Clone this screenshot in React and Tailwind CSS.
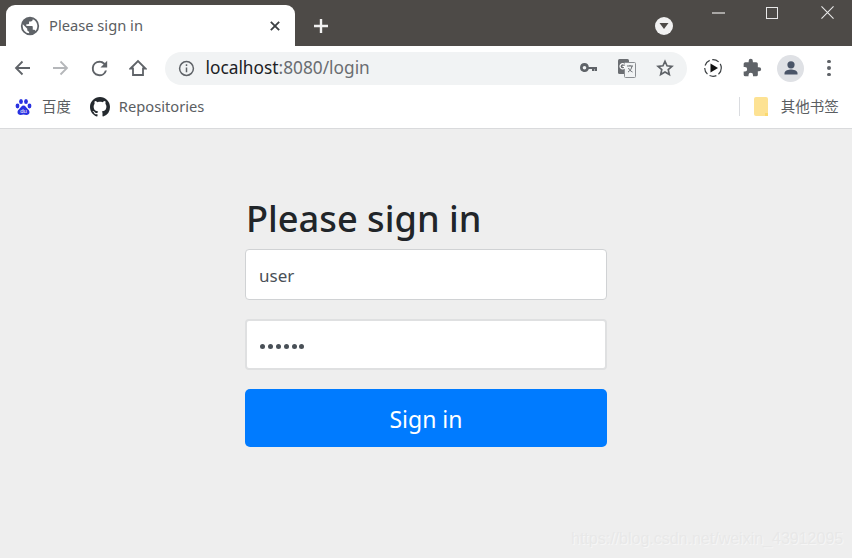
import React from "react";

const sans = { fontFamily: '"Noto Sans", "Noto Sans CJK SC", sans-serif' };

function Tab() {
  return (
    <div className="relative ml-[6px] mt-[5px] flex h-[41px] w-[289px] items-center rounded-t-[9px] bg-white pl-[13px] pr-[15px]">
      <svg width="22" height="22" viewBox="0 0 24 24" fill="#5f6368">
        <path d="M12 2a10 10 0 1 0 0 20 10 10 0 0 0 0-20zM4 12c0-.6.07-1.2.2-1.8L9 15v1c0 1.1.9 2 2 2v2a8 8 0 0 1-7-8zm13.9 5.4c-.26-.8-1-1.4-1.9-1.4h-1v-3c0-.55-.45-1-1-1H8v-2h2c.55 0 1-.45 1-1V7h2c1.1 0 2-.9 2-2v-.4a8 8 0 0 1 2.9 12.8z" />
      </svg>
      <span className="ml-[8px] flex-1 text-[14.700px] leading-none text-[#5b5e62]">Please sign in</span>
      <svg width="10" height="10" viewBox="0 0 12 12" stroke="#3c4043" strokeWidth="2.200" fill="none">
        <path d="M1 1l10 10M11 1L1 11" />
      </svg>
    </div>
  );
}

function TitleBar() {
  return (
    <div className="flex h-[46px] bg-[#4d4a47]">
      <Tab />
      <div className="ml-[17px] mt-[17px] h-[16px]">
        <svg width="18" height="18" viewBox="0 0 18 18" stroke="#f1f1f1" strokeWidth="2.400" fill="none">
          <path d="M9 2v14M2 9h14" />
        </svg>
      </div>
      <div className="ml-[325px] mt-[17px] flex h-[18px] w-[18px] items-center justify-center rounded-full bg-[#f1f1f1]">
        <svg width="10" height="8" viewBox="0 0 10 8" fill="#4d4a47">
          <path d="M0.5 1h9L5 7z" />
        </svg>
      </div>
      <div className="ml-[39px] mt-[12px] h-[2px] w-[13px] bg-[#a9a7a5]" />
      <div className="ml-[41px] mt-[7px] h-[12px] w-[12px] border border-[#e8e8e8]" />
      <svg className="ml-[43px] mt-[6px]" width="13" height="13" viewBox="0 0 14 14" stroke="#e8e8e8" strokeWidth="1.200" fill="none">
        <path d="M0.5 0.5l13 13M13.5 0.5l-13 13" />
      </svg>
    </div>
  );
}

function Toolbar() {
  return (
    <div className="flex h-[44px] items-center bg-white">
      <svg className="ml-[14px]" width="17" height="16" viewBox="0 0 17 16" stroke="#5f6368" strokeWidth="1.800" fill="none">
        <path d="M16 8H2M8.500 1.500L2 8l6.500 6.500" />
      </svg>
      <svg className="ml-[21px]" width="17" height="16" viewBox="0 0 17 16" stroke="#b5b7ba" strokeWidth="1.800" fill="none">
        <path d="M1 8h14M8.500 1.500L15 8l-6.500 6.500" />
      </svg>
      <svg className="ml-[19px]" width="23" height="23" viewBox="0 0 24 24" fill="#5f6368">
        <path d="M17.650 6.350A7.960 7.960 0 0 0 12 4a8 8 0 1 0 7.730 10h-2.080A6 6 0 1 1 12 6c1.660 0 3.140.69 4.220 1.780L13 11h7V4l-2.350 2.350z" />
      </svg>
      <svg className="ml-[18px]" width="18" height="18" viewBox="0 0 18 18" stroke="#5f6368" strokeWidth="1.800" fill="none">
        <path d="M1.500 9.500L9 2l7.500 7.500H14V16H4V9.500z" />
      </svg>
      <div className="ml-[18px] flex h-[33px] w-[522px] items-center rounded-full bg-[#f1f3f4] pl-[13px] pr-[13px]">
        <svg width="17" height="17" viewBox="0 0 16 16" fill="none" stroke="#5f6368" strokeWidth="1.400">
          <circle cx="8" cy="8" r="6.500" />
          <path d="M8 7v4.500M8 4v1.600" />
        </svg>
        <span className="ml-[10.500px] flex-1 text-[17.300px] leading-none">
          <span className="text-[#202124]">localhost</span>
          <span className="text-[#6a6d71]">:8080/login</span>
        </span>
        <svg width="18" height="10" viewBox="0 0 18 10" fill="#5f6368">
          <path d="M4.500 0a4.500 4.500 0 1 0 4.300 6H12v2h2.500V6H15v2h2V4H8.800A4.500 4.500 0 0 0 4.500 0zm0 3a1.800 1.800 0 1 1 0 3.600 1.800 1.800 0 0 1 0-3.600z" />
        </svg>
        <svg className="ml-[20px]" width="18" height="19" viewBox="0 0 18 19">
          <rect x="0" y="0" width="11" height="15" rx="1.500" fill="#6b6e72" />
          <rect x="6.500" y="3.500" width="11" height="15" rx="1" fill="#f1f3f4" stroke="#8b8e92" />
          <path d="M9 7h6M12 6v1M14 7c-.5 3-2 5-4 6M10.500 9c.7 1.800 2 3 4 4" stroke="#6b6e72" strokeWidth="1" fill="none" />
          <path d="M6.500 5.500a2.600 2.600 0 1 0 0 3.600V7.300H4.500" stroke="#fff" strokeWidth="1.200" fill="none" />
        </svg>
        <svg className="ml-[20px]" width="18" height="18" viewBox="0 0 24 24" fill="none" stroke="#5f6368" strokeWidth="2.200" strokeLinejoin="miter">
          <path d="M12 3l2.700 6.100 6.600.7-5 4.400 1.500 6.500L12 17.300l-5.800 3.400 1.500-6.500-5-4.400 6.600-.7z" />
        </svg>
      </div>
      <svg className="ml-[16px]" width="20" height="20" viewBox="0 0 20 20" fill="none">
        <circle cx="10" cy="10" r="8.300" stroke="#3c4043" strokeWidth="1.200" strokeDasharray="7 2.500" />
        <path d="M7.500 5.500l7.500 4.500-7.500 4.500z" fill="#111" />
      </svg>
      <svg className="ml-[19px]" width="20" height="20" viewBox="0 0 24 24" fill="#5f6368">
        <path d="M20.500 11H19V7a2 2 0 0 0-2-2h-4V3.500a2.500 2.500 0 0 0-5 0V5H4a2 2 0 0 0-2 2v3.800h1.500a2.700 2.700 0 0 1 0 5.400H2V20a2 2 0 0 0 2 2h3.800v-1.500a2.700 2.700 0 0 1 5.400 0V22H17a2 2 0 0 0 2-2v-4h1.500a2.500 2.500 0 0 0 0-5z" />
      </svg>
      <div className="ml-[15px] flex h-[27px] w-[27px] items-center justify-center rounded-full bg-[#dfe1e5]">
        <svg width="18" height="18" viewBox="0 0 18 18" fill="#4a5568">
          <circle cx="9" cy="5.800" r="3.600" />
          <path d="M2.500 15.500v-1.400c0-2.500 4.300-3.600 6.500-3.600s6.500 1.100 6.500 3.600v1.400z" />
        </svg>
      </div>
      <div className="ml-[23px] flex flex-col gap-[3px]">
        <div className="h-[3.500px] w-[3.500px] rounded-full bg-[#5f6368]" />
        <div className="h-[3.500px] w-[3.500px] rounded-full bg-[#5f6368]" />
        <div className="h-[3.500px] w-[3.500px] rounded-full bg-[#5f6368]" />
      </div>
    </div>
  );
}

function Bookmarks() {
  return (
    <div className="flex h-[39px] items-center border-b border-[#d9dadc] bg-white pb-[5px] text-[14.700px] text-[#5b5e62]">
      <svg className="ml-[15px]" width="17" height="18" viewBox="0 0 17 18" fill="#2932e1">
        <ellipse cx="2.500" cy="8" rx="1.900" ry="2.400" />
        <ellipse cx="6" cy="3.500" rx="1.900" ry="2.500" />
        <ellipse cx="11" cy="3.500" rx="1.900" ry="2.500" />
        <ellipse cx="14.500" cy="8" rx="1.900" ry="2.400" />
        <path d="M8.500 7.500c-2 0-2.700 2-4 3.200C3 12 2.500 13 2.500 14.200 2.500 16 4 17 5.500 17c1.200 0 2-.4 3-.4s1.800.4 3 .4c1.500 0 3-1 3-2.800 0-1.200-.5-2.200-2-3.500-1.300-1.200-2-3.200-4-3.200z" />
        <text x="8.500" y="15" textAnchor="middle" fontSize="6" fontFamily="Liberation Sans, sans-serif" fill="#fff">du</text>
      </svg>
      <span className="ml-[10px] text-[14.400px] leading-none" style={{ fontFamily: '"Noto Sans CJK SC", sans-serif' }}>百度</span>
      <svg className="ml-[19px]" width="20" height="20" viewBox="0 0 16 16" fill="#24292e">
        <path d="M8 0C3.580 0 0 3.580 0 8c0 3.540 2.290 6.530 5.470 7.590.4.070.55-.17.55-.38 0-.19-.01-.82-.01-1.490-2.010.37-2.530-.49-2.690-.94-.09-.23-.48-.94-.82-1.130-.28-.15-.68-.52-.01-.53.630-.01 1.080.58 1.230.82.720 1.210 1.870.87 2.330.66.070-.52.280-.87.510-1.070-1.780-.2-3.640-.89-3.640-3.950 0-.87.310-1.590.82-2.150-.08-.2-.36-1.020.08-2.120 0 0 .67-.21 2.200.82.640-.18 1.320-.27 2-.27s1.360.09 2 .27c1.530-1.040 2.200-.82 2.200-.82.440 1.100.16 1.920.08 2.120.51.560.82 1.270.82 2.150 0 3.070-1.870 3.750-3.650 3.950.29.250.54.730.54 1.480 0 1.070-.01 1.930-.01 2.200 0 .21.150.46.550.38A8.010 8.010 0 0 0 16 8c0-4.420-3.580-8-8-8z" />
      </svg>
      <span className="ml-[9px] leading-none">Repositories</span>
      <div className="ml-[534.500px] h-[19px] w-px bg-[#dadce0]" />
      <svg className="ml-[14px]" width="15" height="19" viewBox="0 0 15 19">
        <path d="M2 0h10a2 2 0 0 1 2 2v15a2 2 0 0 1-2 2H2a2 2 0 0 1-2-2V2a2 2 0 0 1 2-2z" fill="#fde293" />
        <path d="M11 19v-3h3v3z" fill="#fbd96e" />
      </svg>
      <span className="ml-[12px] text-[14.500px] leading-none" style={{ fontFamily: '"Noto Sans CJK SC", sans-serif' }}>其他书签</span>
    </div>
  );
}

function Form() {
  return (
    <div className="ml-[245px] flex w-[362px] flex-col pt-[60px]">
      <h2 className="pl-[1px] text-[36.200px] font-medium leading-[58px] text-[#212529]">Please sign in</h2>
      <div className="mt-[2px] flex h-[51px] items-center rounded-[4px] border border-[#d0d2d4] bg-white pl-[13px] pt-[3px] text-[17px] text-[#495057]">
        user
      </div>
      <div className="mt-[19px] flex h-[51px] items-center rounded-[4px] border-2 border-[#dfe0e1] bg-white pl-[13px] pt-[3px] text-[#495057]">
        <div className="flex gap-[2.900px]">
          {[0, 1, 2, 3, 4, 5].map((i) => (
            <div key={i} className="h-[5px] w-[5px] rounded-full bg-[#495057]" />
          ))}
        </div>
      </div>
      <button className="mt-[19px] flex h-[58px] items-center justify-center rounded-[5px] bg-[#007bff] pt-[2px] text-[23px] text-white">
        Sign in
      </button>
    </div>
  );
}

export default function App() {
  return (
    <div className="relative flex h-[558px] w-[852px] flex-col overflow-hidden bg-[#eeeeee]" style={sans}>
      <TitleBar />
      <Toolbar />
      <Bookmarks />
      <Form />
      <div
        className="absolute left-[571px] top-[529px] text-[16px] leading-[20px] text-[#e8e8e8]"
        style={{ fontFamily: '"Liberation Sans", sans-serif', textShadow: "1px 1px 0 #f6f6f6" }}
      >
        https://blog.csdn.net/weixin_43912095
      </div>
    </div>
  );
}
